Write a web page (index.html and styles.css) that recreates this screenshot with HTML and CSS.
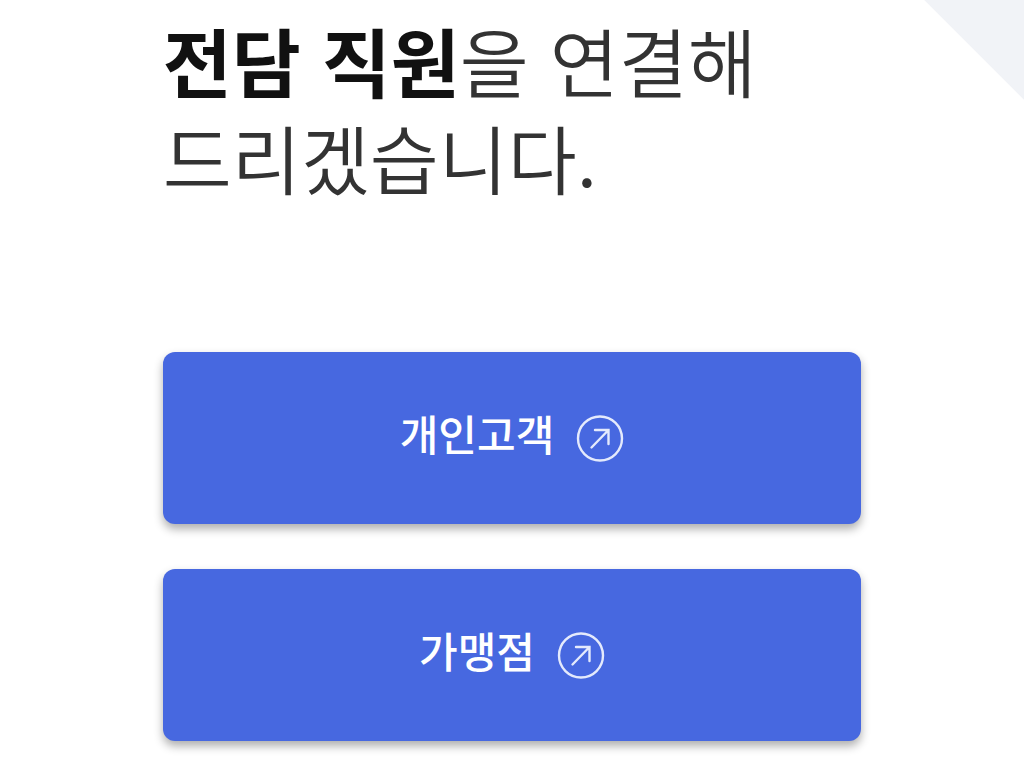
FILE: index.html
```
<!DOCTYPE html>
<html lang="ko">

<head>
    <meta charset="UTF-8">
    <meta name="viewport" content="width=device-width, initial-scale=1">
    <title>전담 직원 연결</title>
    <link rel="stylesheet" href="styles.css">
</head>

<body>
    <main class="wrap">
        <h1 class="title"><strong>전담 직원</strong>을 연결해<br>드리겠습니다.</h1>
        <div class="btns">
            <button type="button" class="btn">
                <span class="label">개인고객</span>
                <svg class="ico" viewBox="0 0 48 48" aria-hidden="true">
                    <circle cx="24" cy="24.5" r="22" />
                    <path d="M15.5 33.5L32.5 16M19 16H32.5V30" />
                </svg>
            </button>
            <button type="button" class="btn">
                <span class="label">가맹점</span>
                <svg class="ico" viewBox="0 0 48 48" aria-hidden="true">
                    <circle cx="24" cy="24.5" r="22" />
                    <path d="M15.5 33.5L32.5 16M19 16H32.5V30" />
                </svg>
            </button>
        </div>
    </main>
</body>

</html>
```
FILE: styles.css
```
* {
    box-sizing: border-box;
}

body {
    margin: 0;
    background: #fff linear-gradient(225deg, #f1f3f7 70px, transparent 71px) no-repeat;
    font-family: "Noto Sans CJK KR", sans-serif;
}

.wrap {
    padding: 11px 15.9% 24px;
}

.title {
    margin: 0;
    color: #333;
    font-size: 75px;
    line-height: 97px;
    font-weight: 350;
    white-space: nowrap;
}

.title strong {
    color: #111;
    font-weight: 700;
}

.btns {
    display: grid;
    gap: 45px;
    margin-top: 147px;
}

.btn {
    display: flex;
    align-items: center;
    justify-content: center;
    gap: 22px;
    width: 100%;
    height: 172px;
    padding: 0;
    border: 0;
    border-radius: 12px;
    background: #4768e0;
    box-shadow: 0 5px 10px rgba(0, 0, 0, .32);
    color: #fff;
    font: 500 42px/60px "Noto Sans CJK KR", sans-serif;
    cursor: pointer;
}

.label {
    padding-bottom: 10px;
}

.ico {
    width: 48px;
    height: 48px;
    fill: none;
    stroke: #e4eafc;
    stroke-width: 2.4;
    stroke-linecap: round;
}
```
